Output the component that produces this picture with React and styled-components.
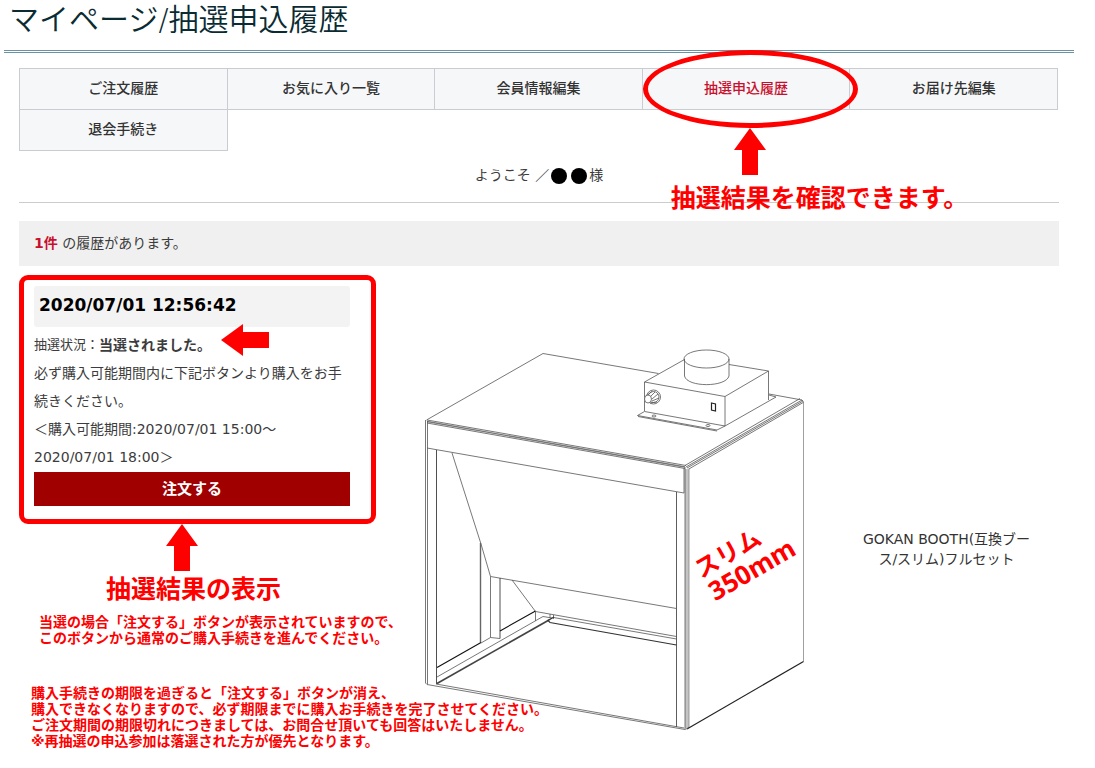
import React from "react"
import styled, {createGlobalStyle, css} from "styled-components"

const GlobalStyle = createGlobalStyle`
* {
  box-sizing: border-box;
}
body {
  margin: 0;
  background: #fff;
  color: #3c3c3c;
  font-family: "DejaVu Sans", "Noto Sans CJK JP", sans-serif;
  font-size: 14px;
}
`;

const Page = styled.div`
padding: 0 21px 0 4px;
`

const Title = styled.h1`
margin: 0;
padding: 0 5px 10px;
border-bottom: 3px double #6a93a3;
color: #0b2b33;
font-size: 30px;
font-weight: 350;
line-height: 40px;
`

const Main = styled.main`
padding: 15px 15px 10px;
`

const TabList = styled.ul`
display: grid;
grid-template-columns: repeat(5, 1fr);
margin: 0;
padding: 0 2px 1px 0;
list-style: none;
`

const TabItem = styled.li`
position: relative;
margin: 0 -1px -1px 0;
`

const TabLink = styled.a`
display: block;
padding-bottom: 2px;
border: 1px solid #c9ccd0;
background: #f6f7f9;
color: ${props => props.$active ? "#c8102e" : "#333"};
font-weight: 500;
line-height: 38px;
text-align: center;
text-decoration: none;
`

const Callout = styled.div`
position: absolute;
z-index: 2;
top: -18px;
left: 1px;
display: flex;
flex-direction: column;
align-items: center;
width: 215px;
pointer-events: none;
`

const Ring = styled.div`
width: 215px;
height: 78px;
border: 5px solid #f00;
border-radius: 50%;
`

const redText = css`
color: #f00;
font-weight: bold;
white-space: nowrap;
`

const CalloutLabel = styled.strong`
${redText}
align-self: flex-start;
margin: 8px 0 0 28px;
font-size: 25px;
line-height: 32px;
`

const Welcome = styled.p`
display: flex;
justify-content: center;
align-items: center;
margin: 0;
padding: 12px 0 14px;
border-bottom: 1px solid #ccc;
line-height: 25px;
`

const Dot = styled.span`
width: 16px;
height: 16px;
margin: 0 2px;
border-radius: 50%;
background: #000;
`

const CountBar = styled.p`
margin: 18px 0 9px;
padding: 0 15px;
background: #f0f0f0;
line-height: 45px;
strong {
  color: #c8102e;
}
`

const Entry = styled.section`
display: grid;
grid-template-columns: 401px 1fr;
`

const Side = styled.div`
position: relative;
z-index: 1;
`

const Card = styled.div`
width: 357px;
padding: 6px 21px 13px 10px;
border: 5px solid #f00;
border-radius: 9px;
`

const EntryDate = styled.h2`
margin: 0 0 4px;
padding: 0 5px 3px;
border-radius: 3px;
background: #f3f3f3;
color: #000;
font-size: 17px;
line-height: 38px;
`

const Status = styled.p`
display: flex;
align-items: center;
margin: 0;
font-size: 13px;
line-height: 28px;
strong {
  font-size: 14px;
}
`

const StatusArrow = styled.span`
display: flex;
margin: -10px 0 0 10px;
`

const Message = styled.p`
margin: 0;
line-height: 28px;
`

const OrderButton = styled.button`
display: block;
width: 100%;
height: 34px;
margin-top: 1px;
padding: 0 0 3px;
border: 0;
background: #a00000;
color: #fff;
font-family: inherit;
font-size: 15px;
font-weight: bold;
cursor: pointer;
`

const ResultArrow = styled.div`
display: flex;
margin-left: 147px;
`

const ResultLabel = styled.strong`
${redText}
display: block;
margin: 2px 0 7px 87px;
font-size: 25px;
line-height: 34px;
`

const Note = styled.p`
${redText}
margin: 0 0 0 ${props => props.$indent};
font-size: 14px;
line-height: 16px;
& + & {
  margin-top: 39px;
}
`

const Product = styled.a`
display: flex;
align-items: center;
padding-top: 65px;
color: #333;
text-decoration: none;
`

const ProductName = styled.span`
flex: 1;
padding-left: 24px;
line-height: 20px;
text-align: center;
white-space: nowrap;
`

const tabs = [
    "ご注文履歴",
    "お気に入り一覧",
    "会員情報編集",
    "抽選申込履歴",
    "お届け先編集",
    "退会手続き",
]

const UpArrow = () => (
    <svg width="32" height="47" viewBox="0 0 32 47" aria-hidden="true">
        <path d="M16 0L32 22H24V47H8V22H0Z" fill="#f00" />
    </svg>
)

const LeftArrow = () => (
    <svg width="48" height="32" viewBox="0 0 48 32" aria-hidden="true">
        <path d="M0 16L22 0V8H48V24H22V32Z" fill="#f00" />
    </svg>
)

const Booth = () => (
    <svg width="390" height="418" viewBox="420 340 390 418" fill="none" stroke="#555" strokeWidth="0.8" role="img" aria-label="GOKAN BOOTH">
        {/* top panel */}
        <path d="M426.500 420L543 353.500L658.500 373.500M769 394L802 400L803.500 401.500" />
        <path d="M427 420L686 465.500M427 423L685 468.500" />
        <path d="M427 421.500L685 467" stroke="#777" strokeWidth="1.400" />
        <path d="M685 465.500L800 398.500M686 467L802 400M687 468L803 401M688 469.500L804 402" />
        <path d="M427 448L684 493V468" />
        {/* frame */}
        <path d="M425.500 420V683M427.500 421V684" />
        <path d="M436.500 450V684" stroke="#222" />
        <path d="M676.500 492V727" stroke="#333" />
        <path d="M687 469V728" stroke="#c4c4c4" strokeWidth="4" />
        <path d="M685 467V729" />
        <path d="M689 469V728" stroke="#888" />
        <path d="M803.500 402V661.500" stroke="#888" />
        <path d="M687 729L803.500 661.500" stroke="#222" strokeWidth="1.200" />
        <path d="M425.500 683L427 684.500L685 729.500L689 727.500M436 684L684 728" />
        {/* inside */}
        <path d="M452 453L481 544L490.500 576.500L676.500 608.500M490.500 576.500V637.500M512 580L535.500 611.500" />
        <path d="M480.500 543V642.500" stroke="#666" strokeWidth="1.400" />
        <path d="M500 578V638.500" stroke="#222" />
        <path d="M481 643L490.500 637.500L500 638.500" />
        <path d="M437 667.500L481 642.500M500 631L535.500 611" stroke="#111" strokeWidth="1.100" />
        <path d="M535.500 611.500V621M535.500 611.500L676.500 636.500M437 677L543 616.500L552 618M553.500 617.500L676.500 639M550 614V618M553.500 615V619" />
        <path d="M437 683.500L549 620" stroke="#444" strokeWidth="1.700" />
        <path d="M554 617L548 620.500L550 622.500L676.500 645" stroke="#333" strokeWidth="1.200" />
        {/* fan unit */}
        <path d="M644.500 411V382L684.500 359.500M644.500 382L725 396.500V426M725 396.500L768.500 371V400M729 364.500L768.500 371M725 426L776 397L769 395" />
        <path d="M644.500 411.500L725 426L717 430L637.500 415.500ZM638 416.500L717 431" />
        <ellipse cx="706.500" cy="359" rx="22.500" ry="9" />
        <path d="M684.500 359V376C687 387.500 726 387.500 729 376V359" />
        <path d="M711.500 403L715.500 404V411L711.500 410Z" strokeWidth="1.200" stroke="#222" />
        <circle cx="653.500" cy="397" r="7" />
        <circle cx="653.500" cy="397" r="5.500" />
        <path d="M652 391.500L646 396M655 392L650 397M658 394L652 399M659 398L652 401M657 402L650 403" />
        <ellipse cx="648" cy="399" rx="3.500" ry="4" fill="#fff" />
        <ellipse cx="654" cy="416" rx="2" ry="1" />
        <ellipse cx="708" cy="425.500" rx="2" ry="1" />
        <g transform="translate(704 578) rotate(-30)" fill="#f00" stroke="none" fontSize="24" fontWeight="bold">
            <text x="-3" y="-1">スリム</text>
            <text x="-2" y="26" fontFamily="'Noto Sans', 'DejaVu Sans', sans-serif" fontSize="26">350mm</text>
        </g>
    </svg>
)

function Tabs() {
    return (
        <nav>
            <TabList>
                {tabs.map((tab) => {
                    const active = tab === "抽選申込履歴"
                    return (
                        <TabItem key={tab}>
                            <TabLink href="#" $active={active}>{tab}</TabLink>
                            {active && (
                                <Callout>
                                    <Ring />
                                    <UpArrow />
                                    <CalloutLabel>抽選結果を確認できます。</CalloutLabel>
                                </Callout>
                            )}
                        </TabItem>
                    )
                })}
            </TabList>
        </nav>
    )
}

function App() {
    return (
        <Page>
            <GlobalStyle />
            <Title>マイページ/抽選申込履歴</Title>
            <Main>
                <Tabs />
                <Welcome>ようこそ ／<Dot /><Dot />様</Welcome>
                <CountBar><strong>1件</strong> の履歴があります。</CountBar>
                <Entry>
                    <Side>
                        <Card>
                            <EntryDate>2020/07/01 12:56:42</EntryDate>
                            <Status>
                                抽選状況：<strong>当選されました。</strong>
                                <StatusArrow><LeftArrow /></StatusArrow>
                            </Status>
                            <Message>
                                必ず購入可能期間内に下記ボタンより購入をお手続きください。<br />
                                ＜購入可能期間:2020/07/01 15:00～<br />
                                2020/07/01 18:00＞
                            </Message>
                            <OrderButton type="button">注文する</OrderButton>
                        </Card>
                        <ResultArrow><UpArrow /></ResultArrow>
                        <ResultLabel>抽選結果の表示</ResultLabel>
                        <Note $indent="20px">
                            当選の場合「注文する」ボタンが表示されていますので、<br />
                            このボタンから通常のご購入手続きを進んでください。
                        </Note>
                        <Note $indent="12px">
                            購入手続きの期限を過ぎると「注文する」ボタンが消え、<br />
                            購入できなくなりますので、必ず期限までに購入お手続きを完了させてください。<br />
                            ご注文期間の期限切れにつきましては、お問合せ頂いても回答はいたしません。<br />
                            ※再抽選の申込参加は落選された方が優先となります。
                        </Note>
                    </Side>
                    <Product href="#">
                        <Booth />
                        <ProductName>GOKAN BOOTH(互換ブー<br />ス/スリム)フルセット</ProductName>
                    </Product>
                </Entry>
            </Main>
        </Page>
    )
}


export default App
